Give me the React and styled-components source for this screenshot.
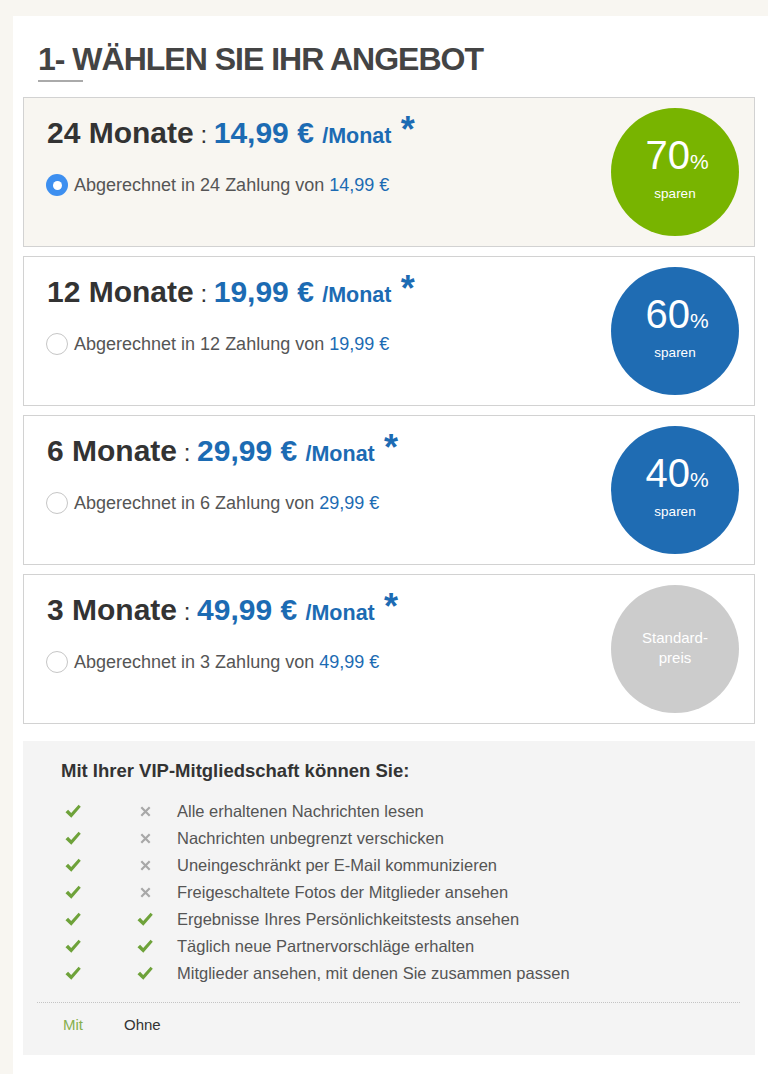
import React from "react";
import styled, { createGlobalStyle } from "styled-components";

const Global = createGlobalStyle`
  html, body { margin: 0; padding: 0; }
  body {
    background: #f8f6f1;
    font-family: "Liberation Sans", Arial, Helvetica, sans-serif;
    color: #333;
  }
`;

const Page = styled.div`
  padding: 16px 0 0 13px;
`;

const Panel = styled.div`
  background: #fff;
  min-height: 1058px;
  padding: 25px 13px 20px 10px;
  box-sizing: border-box;
`;

const TitleWrap = styled.div`
  padding-left: 15px;
  margin-bottom: 15px;
`;

const Title = styled.h1`
  margin: 0;
  font-size: 32px;
  line-height: 36px;
  font-weight: bold;
  letter-spacing: -1px;
  color: #444;
`;

const TitleRule = styled.div`
  width: 45px;
  height: 2px;
  margin-top: 3px;
  background: #aaa;
`;

const Cards = styled.div`
  display: flex;
  flex-direction: column;
  gap: 9px;
`;

const Card = styled.div`
  height: 150px;
  box-sizing: border-box;
  border: 1px solid #d2d2d2;
  background: ${(p) => (p.$active ? "#f8f6f1" : "#fff")};
  display: flex;
  align-items: center;
  justify-content: space-between;
  padding: 0 15px 0 23px;
`;

const Offer = styled.div`
  align-self: flex-start;
  padding-top: 19px;
`;

const Heading = styled.div`
  font-size: 30px;
  line-height: 32px;
  font-weight: bold;
  color: #333;
  white-space: nowrap;
`;

const Colon = styled.span`
  font-weight: normal;
  font-size: 24px;
  color: #333;
`;

const Price = styled.span`
  color: #1c6bb3;
`;

const PerMonth = styled.span`
  color: #1c6bb3;
  font-size: 21.5px;
`;

const Star = styled.span`
  color: #1c6bb3;
  font-size: 36px;
  line-height: 0;
  position: relative;
  top: -1px;
  margin-left: 1px;
`;

const Billing = styled.label`
  display: flex;
  align-items: center;
  gap: 6px;
  margin-top: 21px;
  margin-left: -1px;
  font-size: 18px;
  line-height: 24px;
  color: #555;
`;

const Radio = styled.span`
  width: 22px;
  height: 22px;
  box-sizing: border-box;
  border-radius: 50%;
  flex: none;
  display: flex;
  align-items: center;
  justify-content: center;
  background: ${(p) => (p.$checked ? "#3d8ff0" : "#fff")};
  border: ${(p) => (p.$checked ? "none" : "1px solid #c6c6c6")};
  &::after {
    content: "";
    width: 9px;
    height: 9px;
    border-radius: 50%;
    background: #fff;
    display: ${(p) => (p.$checked ? "block" : "none")};
  }
`;

const BlueAmount = styled.span`
  color: #1c6bb3;
`;

const Badge = styled.div`
  width: 128px;
  height: 128px;
  border-radius: 50%;
  flex: none;
  background: ${(p) => p.$color};
  color: #fff;
  display: flex;
  flex-direction: column;
  align-items: center;
  justify-content: center;
  text-align: center;
  padding-bottom: 8px;
  box-sizing: border-box;
`;

const Percent = styled.div`
  font-size: 40px;
  line-height: 42px;
  margin-left: 4px;
`;

const PercentSign = styled.span`
  font-size: 21px;
`;

const Save = styled.div`
  font-size: 13.5px;
  line-height: 16px;
  margin-top: 3px;
`;

const Standard = styled.div`
  font-size: 15px;
  line-height: 20px;
  padding-top: 6px;
`;

const Features = styled.section`
  margin-top: 17px;
  background: #f4f4f4;
  padding: 18px 15px 20px 14px;
`;

const FeaturesTitle = styled.h2`
  margin: 0 0 15px 24px;
  font-size: 18.5px;
  line-height: 24px;
  font-weight: bold;
  color: #333;
`;

const FeatureGrid = styled.div`
  display: grid;
  grid-template-columns: 73px 42px 1fr;
  grid-auto-rows: 27px;
  align-items: center;
  padding-left: 25px;
`;

const IconCell = styled.div`
  display: flex;
  align-items: center;
  padding-left: ${(p) => p.$pad || 0}px;
`;

const IconBox = styled.span`
  width: 16px;
  height: 15px;
  display: flex;
  align-items: center;
  justify-content: center;
`;

const FeatureText = styled.div`
  font-size: 16.5px;
  line-height: 27px;
  color: #555;
`;

const Divider = styled.div`
  border-top: 1px dotted #c4c4c4;
  margin-top: 15px;
`;

const Legend = styled.div`
  display: flex;
  padding-left: 26px;
  margin-top: 12px;
  font-size: 15px;
  line-height: 20px;
`;

const LegendItem = styled.span`
  color: ${(p) => p.$color};
  width: ${(p) => p.$w}px;
`;

const Check = () => (
  <IconBox>
    <svg width="16" height="15" viewBox="0 0 16 15">
      <path d="M0.5 8.2 L3.1 5.8 L6.2 8.9 L13.6 0.8 L15.8 2.8 L6.3 13.8 Z" fill="#6ea23a" />
    </svg>
  </IconBox>
);

const Cross = () => (
  <IconBox>
    <svg width="11" height="11" viewBox="0 0 11 11">
      <path d="M1.3 1.3 L9.7 9.7 M9.7 1.3 L1.3 9.7" stroke="#a8a8a8" strokeWidth="2.2" />
    </svg>
  </IconBox>
);

const offers = [
  { months: 24, price: "14,99 €", badge: "70", color: "#78b400", active: true },
  { months: 12, price: "19,99 €", badge: "60", color: "#1f6cb3" },
  { months: 6, price: "29,99 €", badge: "40", color: "#1f6cb3" },
  { months: 3, price: "49,99 €", badge: null, color: "#cccccc" },
];

const features = [
  ["Alle erhaltenen Nachrichten lesen", false],
  ["Nachrichten unbegrenzt verschicken", false],
  ["Uneingeschränkt per E-Mail kommunizieren", false],
  ["Freigeschaltete Fotos der Mitglieder ansehen", false],
  ["Ergebnisse Ihres Persönlichkeitstests ansehen", true],
  ["Täglich neue Partnervorschläge erhalten", true],
  ["Mitglieder ansehen, mit denen Sie zusammen passen", true],
];

export default function App() {
  return (
    <>
      <Global />
      <Page>
        <Panel>
          <TitleWrap>
            <Title>1- WÄHLEN SIE IHR ANGEBOT</Title>
            <TitleRule />
          </TitleWrap>
          <Cards>
            {offers.map((o) => (
              <Card key={o.months} $active={o.active}>
                <Offer>
                  <Heading>
                    <span>{o.months} Monate</span>
                    <Colon> : </Colon>
                    <Price>{o.price}</Price> <PerMonth>/Monat</PerMonth>{" "}
                    <Star>*</Star>
                  </Heading>
                  <Billing>
                    <Radio $checked={o.active} />
                    <span>
                      Abgerechnet in {o.months} Zahlung von{" "}
                      <BlueAmount>{o.price}</BlueAmount>
                    </span>
                  </Billing>
                </Offer>
                <Badge $color={o.color}>
                  {o.badge ? (
                    <>
                      <Percent>
                        {o.badge}
                        <PercentSign>%</PercentSign>
                      </Percent>
                      <Save>sparen</Save>
                    </>
                  ) : (
                    <Standard>
                      Standard-
                      <br />
                      preis
                    </Standard>
                  )}
                </Badge>
              </Card>
            ))}
          </Cards>
          <Features>
            <FeaturesTitle>Mit Ihrer VIP-Mitgliedschaft können Sie:</FeaturesTitle>
            <FeatureGrid>
              {features.map(([text, both]) => (
                <React.Fragment key={text}>
                  <IconCell $pad={3}>
                    <Check />
                  </IconCell>
                  <IconCell $pad={2}>{both ? <Check /> : <Cross />}</IconCell>
                  <FeatureText>{text}</FeatureText>
                </React.Fragment>
              ))}
            </FeatureGrid>
            <Divider />
            <Legend>
              <LegendItem $color="#86b04e" $w={61}>Mit</LegendItem>
              <LegendItem $color="#333" $w={60}>Ohne</LegendItem>
            </Legend>
          </Features>
        </Panel>
      </Page>
    </>
  );
}
